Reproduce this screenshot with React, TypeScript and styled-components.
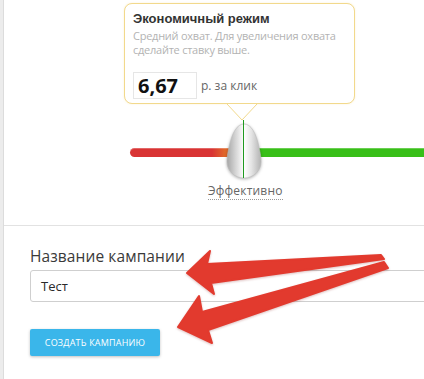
import React from "react";
import styled, { createGlobalStyle } from "styled-components";

const Global = createGlobalStyle`
  html, body { margin: 0; padding: 0; background: #fff; overflow: hidden; }
  body { font-family: "Open Sans", "Liberation Sans", sans-serif; width: 424px; height: 379px; }
  * { box-sizing: border-box; }
`;

const Page = styled.div`
  display: flex;
  width: 424px;
  height: 379px;
  position: relative;
  overflow: hidden;
`;

const Strip = styled.div`
  width: 4px;
  flex: none;
  background: #ececec;
  border-right: 1px solid #dcdcdc;
`;

const Content = styled.div`
  flex: 1;
  display: flex;
  flex-direction: column;
  min-width: 0;
`;

const TopSection = styled.div`
  height: 226px;
  border-bottom: 1px solid #e2e2e2;
  padding: 3px 0 0 126px;
  display: flex;
  flex-direction: column;
`;

const Tooltip = styled.div`
  position: relative;
  width: 231px;
  height: 101px;
  margin-left: -6px;
  border: 1px solid #f2d98c;
  border-radius: 8px;
  background: #fff;
  box-shadow: 0 0 2px rgba(240, 210, 120, 0.35);
  padding: 6px 8px 0 8px;
`;

const Pointer = styled.svg`
  position: absolute;
  left: 102px;
  top: 99px;
`;

const Title = styled.div`
  font-family: "Liberation Sans", Arial, sans-serif;
  font-size: 13px;
  font-weight: 700;
  color: #333;
  line-height: 17px;
`;

const Hint = styled.div`
  font-size: 11px;
  color: #b3b3b3;
  line-height: 14px;
  margin-top: 2px;
  letter-spacing: -0.25px;
`;

const PriceRow = styled.div`
  display: flex;
  align-items: center;
  gap: 4px;
  margin-top: 15px;
`;

const PriceBox = styled.div`
  width: 64px;
  height: 27px;
  border: 1px solid #e6e6e6;
  padding-left: 4px;
  font-size: 20px;
  font-weight: 700;
  color: #111;
  line-height: 25px;
`;

const PriceUnit = styled.span`
  font-size: 12px;
  color: #666;
`;

const Slider = styled.div`
  position: relative;
  height: 58px;
  margin-top: 18px;
`;

const Track = styled.div`
  position: absolute;
  left: 0;
  right: -20px;
  top: 26px;
  height: 9px;
  border-radius: 5px 0 0 5px;
  background: linear-gradient(
    to right,
    #d93434 0,
    #d93434 82px,
    #e0682a 95px,
    #e0682a 100px,
    #38bf18 100px,
    #38bf18 100%
  );
  box-shadow: inset 0 1px 0 rgba(255, 255, 255, 0.25);
`;

const Thumb = styled.svg`
  position: absolute;
  left: 96px;
  top: 1px;
  filter: drop-shadow(0 1px 1.5px rgba(0, 0, 0, 0.3));
`;

const Mark = styled.div`
  position: absolute;
  left: 113px;
  top: -2px;
  width: 1px;
  height: 58px;
  background: #1f9a1f;
`;

const Label = styled.span`
  align-self: flex-start;
  margin-left: 78px;
  margin-top: 3px;
  font-size: 12px;
  color: #666;
  line-height: 16px;
  border-bottom: 1px dotted #999;
  letter-spacing: 0.2px;
`;

const BottomSection = styled.div`
  display: flex;
  flex-direction: column;
  padding: 18px 0 0 26px;
`;

const FieldLabel = styled.div`
  font-size: 15.5px;
  color: #3a3a3a;
  line-height: 24px;
  letter-spacing: 0.1px;
`;

const TextInput = styled.div`
  margin-top: 2px;
  width: 420px;
  height: 32px;
  border: 1px solid #cfcfcf;
  border-radius: 3px;
  padding-left: 10px;
  font-size: 13px;
  font-weight: 500;
  color: #2a2a2a;
  display: flex;
  align-items: center;
`;

const Button = styled.button`
  margin-top: 27px;
  width: 130px;
  height: 27px;
  border: none;
  border-radius: 2px;
  background: #3ab6ea;
  color: #fff;
  font-family: "Open Sans", "Liberation Sans", sans-serif;
  font-size: 9px;
  text-transform: uppercase;
  letter-spacing: 0.2px;
  box-shadow: 0 1px 3px rgba(0, 0, 0, 0.25);
  padding: 0;
`;

const Arrows = styled.svg`
  position: absolute;
  left: 0;
  top: 0;
  pointer-events: none;
  filter: drop-shadow(0 1px 1px rgba(120, 0, 0, 0.25));
`;

export default function App() {
  return (
    <>
      <Global />
      <Page>
        <Strip />
        <Content>
          <TopSection>
            <Tooltip>
              <Title>Экономичный режим</Title>
              <Hint>
                Средний охват. Для увеличения охвата
                <br />
                сделайте ставку выше.
              </Hint>
              <PriceRow>
                <PriceBox>6,67</PriceBox>
                <PriceUnit>р. за клик</PriceUnit>
              </PriceRow>
              <Pointer width="32" height="19" viewBox="0 0 32 19">
                <path d="M0 1 L15 17 L30 1" fill="#fff" stroke="#f2d98c" strokeWidth="1" />
              </Pointer>
            </Tooltip>
            <Slider>
              <Track />
              <Thumb width="36" height="56" viewBox="0 0 36 56">
                <defs>
                  <linearGradient id="tg" x1="0" x2="1" y1="0" y2="0">
                    <stop offset="0" stopColor="#a6a6a6" />
                    <stop offset="0.22" stopColor="#cfcfcf" />
                    <stop offset="0.42" stopColor="#f2f2f2" />
                    <stop offset="0.5" stopColor="#ffffff" />
                    <stop offset="0.72" stopColor="#e4e4e4" />
                    <stop offset="1" stopColor="#b3b3b3" />
                  </linearGradient>
                </defs>
                <path
                  d="M18 1 C11 1 6 10 3 24 C1.5 31 1 35 1 39 C1 48 9 55 18 55 C27 55 35 48 35 39 C35 35 34.5 31 33 24 C30 10 25 1 18 1 Z"
                  fill="url(#tg)"
                  stroke="#bdbdbd"
                  strokeWidth="0.6"
                />
              </Thumb>
              <Mark />
            </Slider>
            <Label>Эффективно</Label>
          </TopSection>
          <BottomSection>
            <FieldLabel>Название кампании</FieldLabel>
            <TextInput>Тест</TextInput>
            <Button>Создать кампанию</Button>
          </BottomSection>
        </Content>
        <Arrows width="424" height="379" viewBox="0 0 424 379">
          <polygon
            points="187,273 210,251 207,264 381,255 384,259 211,283 214,294"
            fill="#e23a2e"
            stroke="#e23a2e"
            strokeWidth="2"
            strokeLinejoin="round"
          />
          <polygon
            points="178,327 199,296 202,312 384,262 388,268 208,330 212,343"
            fill="#e23a2e"
            stroke="#e23a2e"
            strokeWidth="2"
            strokeLinejoin="round"
          />
        </Arrows>
      </Page>
    </>
  );
}
